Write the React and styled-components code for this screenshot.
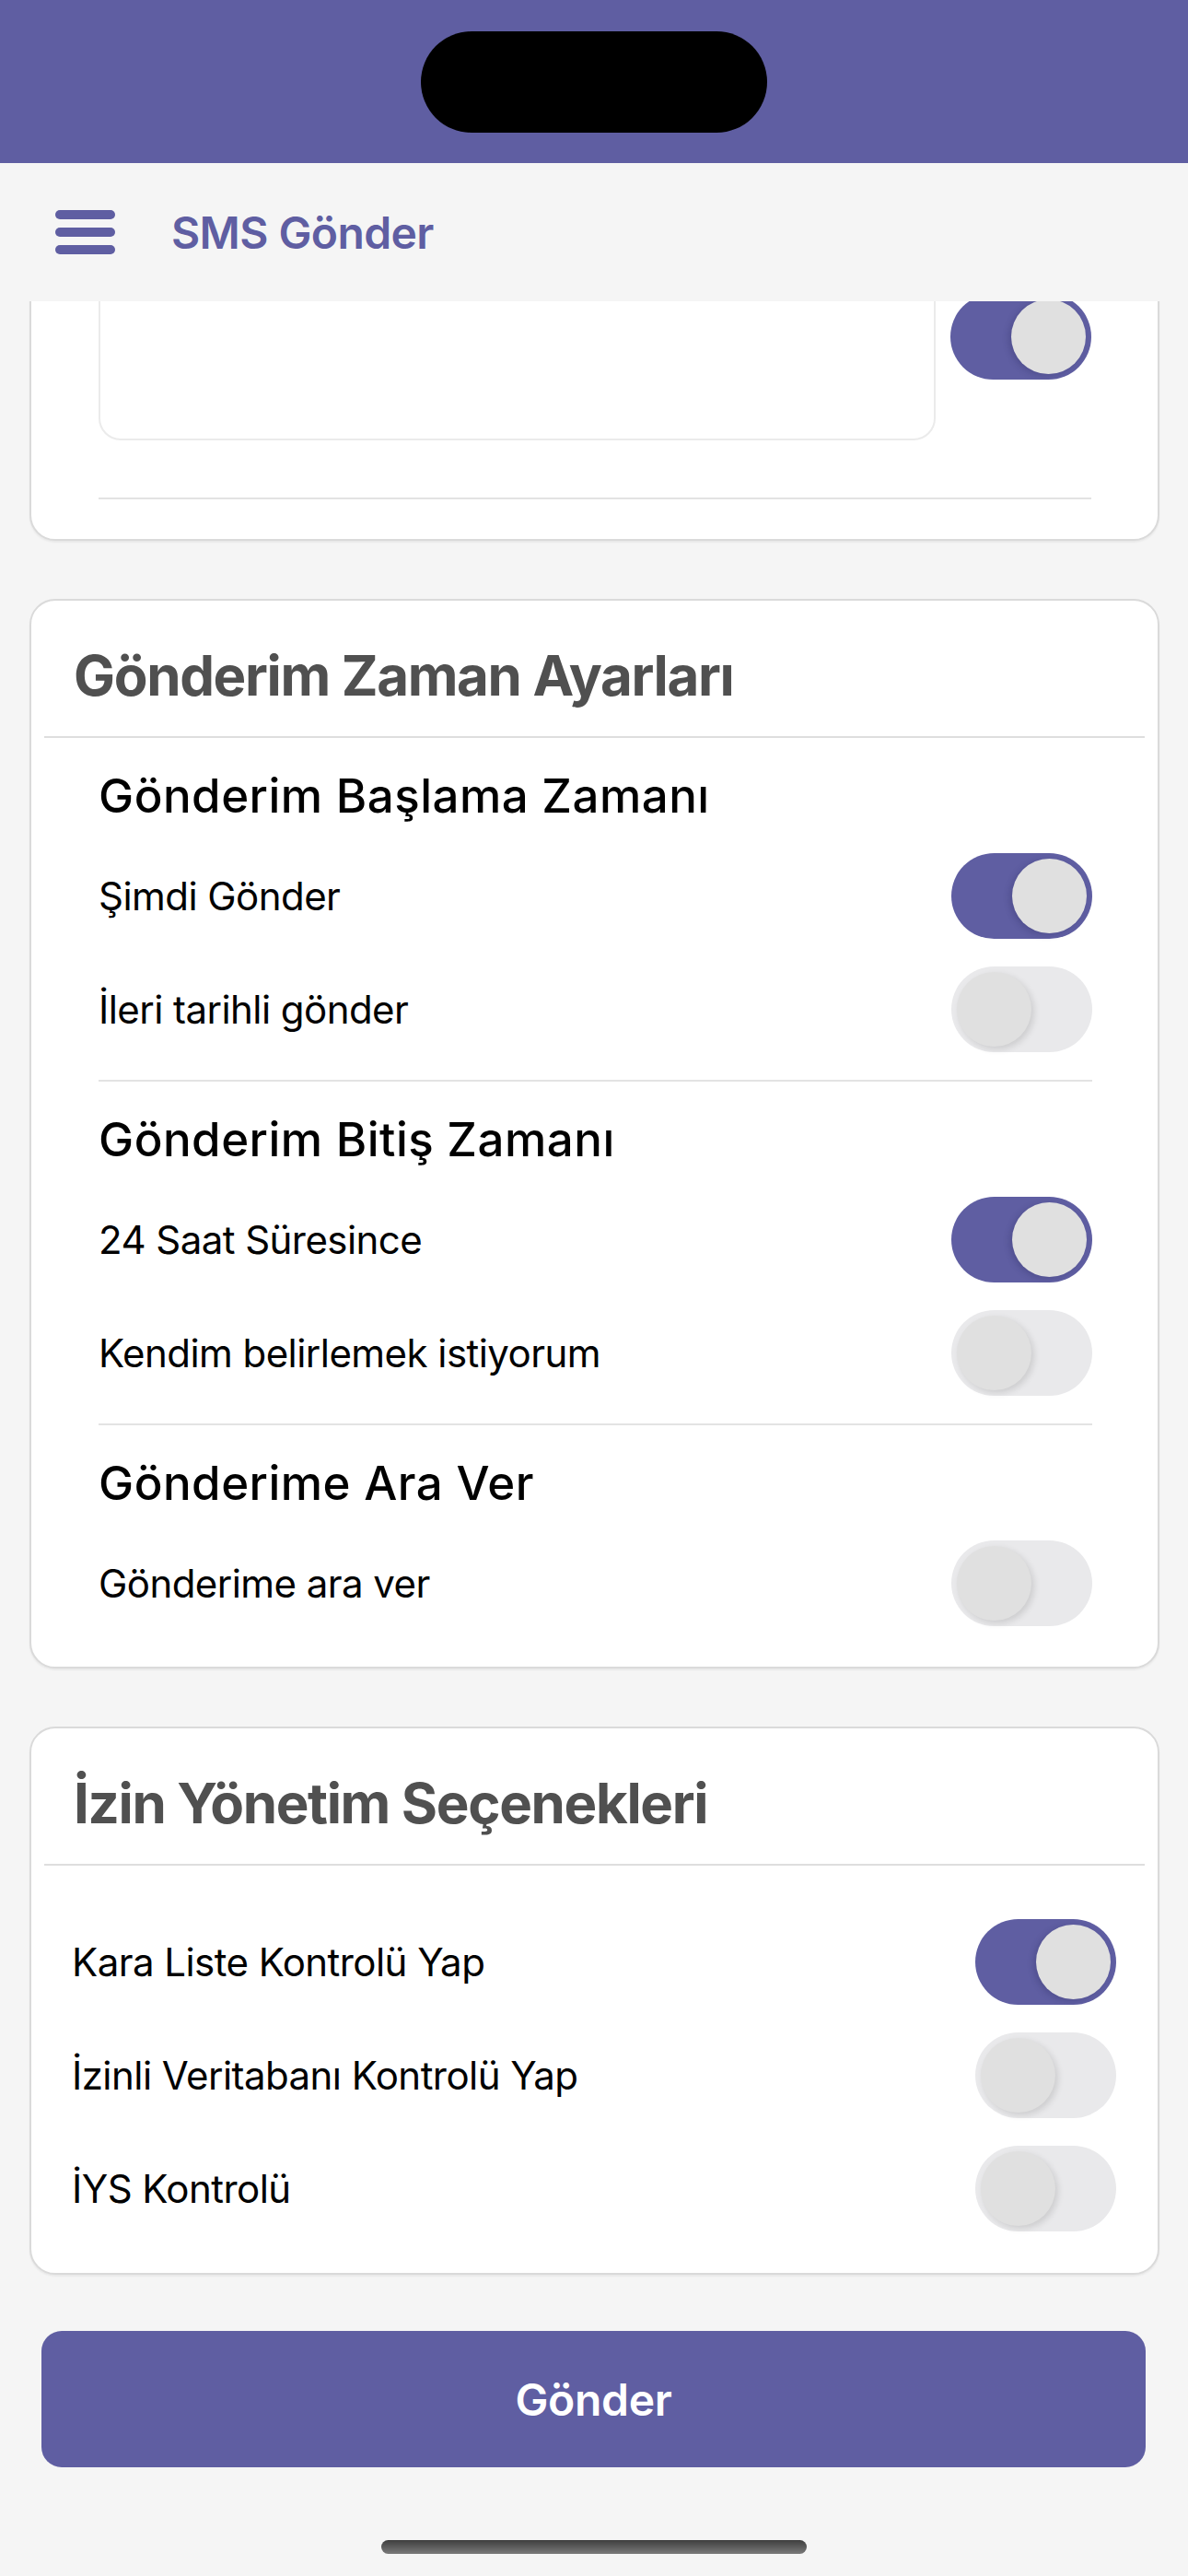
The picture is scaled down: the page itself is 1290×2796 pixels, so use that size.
import styled, { createGlobalStyle } from "styled-components";

const GlobalStyle = createGlobalStyle`
  * {
    box-sizing: border-box;
  }
  body {
    margin: 0;
    background: #f5f5f5;
    font-family: Inter, "Noto Sans", "Liberation Sans", sans-serif;
  }
`;

const PURPLE = "#5f5ea2";

const Screen = styled.div`
  width: 1290px;
  height: 2796px;
  display: flex;
  flex-direction: column;
  overflow: hidden;
  background: #f5f5f5;
`;

const StatusBar = styled.div`
  height: 177px;
  flex-shrink: 0;
  background: ${PURPLE};
  display: flex;
  justify-content: center;
  padding-top: 34px;
`;

const Island = styled.div`
  width: 376px;
  height: 110px;
  border-radius: 55px;
  background: #000;
`;

const Header = styled.div`
  height: 150px;
  flex-shrink: 0;
  display: flex;
  align-items: center;
  gap: 61px;
  padding-left: 60px;
  background: #f5f5f5;
  position: relative;
  z-index: 2;
`;

const Burger = styled.div`
  width: 65px;
  display: flex;
  flex-direction: column;
  gap: 9px;

  span {
    display: block;
    height: 10px;
    border-radius: 5px;
    background: ${PURPLE};
  }
`;

const HeaderTitle = styled.h1`
  margin: 0;
  font-size: 48px;
  font-weight: 600;
  color: ${PURPLE};
  letter-spacing: -0.6px;
`;

const Scroller = styled.div`
  flex: 1;
  overflow: hidden;
`;

/* scroll offset: first card is partly under the header */
const ScrollContent = styled.div`
  margin-top: -117px;
  padding: 0 31px 0 32px;
  display: flex;
  flex-direction: column;
  gap: 63px;
`;

const Card = styled.section`
  background: #fff;
  border: 2px solid #dadada;
  border-radius: 28px;
  box-shadow: 0 2px 2px rgba(0, 0, 0, 0.05);
  padding: ${(p) => p.$pad || "0 14px 44px"};
`;

const CardTitle = styled.h2`
  margin: 0;
  padding: 45px 0 30px 32px;
  font-size: 60px;
  line-height: 72px;
  font-weight: 700;
  color: #505050;
  letter-spacing: -1.35px;
  border-bottom: 2px solid #dedede;
`;

const Group = styled.div`
  margin: 0 57px 0 59px;
  padding: 32px 0 30px;
  border-bottom: ${(p) => (p.$last ? "none" : "2px solid #e3e3e3")};
  padding-bottom: ${(p) => (p.$last ? "0" : "30px")};
`;

const GroupTitle = styled.h3`
  margin: 0 0 32px;
  font-size: 51px;
  line-height: 61px;
  font-weight: 500;
  color: #000;
  letter-spacing: 0.5px;
`;

const Rows = styled.div`
  display: flex;
  flex-direction: column;
  gap: 30px;
  padding: ${(p) => p.$pad || "0"};
`;

const Row = styled.div`
  height: 93px;
  display: flex;
  align-items: center;
  justify-content: space-between;
`;

const Label = styled.span`
  font-size: 42px;
  color: #000;
  letter-spacing: -0.55px;
`;

const Track = styled.div`
  width: 153px;
  height: 93px;
  border-radius: 47px;
  flex-shrink: 0;
  display: flex;
  align-items: center;
  justify-content: ${(p) => (p.$on ? "flex-end" : "flex-start")};
  padding: 0 6px;
  background: ${(p) => (p.$on ? PURPLE : "#e9e9eb")};
`;

const Knob = styled.div`
  width: 81px;
  height: 81px;
  border-radius: 50%;
  background: #e0e0e0;
  box-shadow: ${(p) =>
    p.$on
      ? "-3px 2px 6px rgba(40, 40, 90, 0.25)"
      : "3px 3px 7px rgba(0, 0, 0, 0.12)"};
`;

const Toggle = ({ on }) => (
  <Track $on={on}>
    <Knob $on={on} />
  </Track>
);

const TopRow = styled.div`
  display: flex;
  align-items: center;
  gap: 16px;
  margin: 0 72px 62px 73px;
`;

const MessageBox = styled.div`
  flex: 1;
  height: 226px;
  border: 2px solid #ebebeb;
  border-radius: 24px;
  background: #fff;
`;

const Divider = styled.div`
  height: 2px;
  margin: 0 72px 0 73px;
  background: #e3e3e3;
`;

const SendButton = styled.button`
  margin: -2px 15px 0 13px;
  height: 148px;
  border: none;
  border-radius: 22px;
  background: ${PURPLE};
  color: #fff;
  font-family: inherit;
  font-size: 48px;
  font-weight: 600;
  letter-spacing: -0.3px;
`;

const HomeArea = styled.div`
  height: 60px;
  flex-shrink: 0;
  display: flex;
  justify-content: center;
  padding-top: 21px;
`;

const HomeBar = styled.div`
  width: 462px;
  height: 15px;
  border-radius: 8px;
  background: linear-gradient(180deg, #3e3e3e, #7a7a7a);
`;

const timeGroups = [
  {
    title: "Gönderim Başlama Zamanı",
    rows: [
      { label: "Şimdi Gönder", on: true },
      { label: "İleri tarihli gönder", on: false },
    ],
  },
  {
    title: "Gönderim Bitiş Zamanı",
    rows: [
      { label: "24 Saat Süresince", on: true },
      { label: "Kendim belirlemek istiyorum", on: false },
    ],
  },
  {
    title: "Gönderime Ara Ver",
    rows: [{ label: "Gönderime ara ver", on: false }],
  },
];

const permissionRows = [
  { label: "Kara Liste Kontrolü Yap", on: true },
  { label: "İzinli Veritabanı Kontrolü Yap", on: false },
  { label: "İYS Kontrolü", on: false },
];

const App = () => {
  return (
    <>
      <GlobalStyle />
      <Screen>
        <StatusBar>
          <Island />
        </StatusBar>
        <Header>
          <Burger>
            <span />
            <span />
            <span />
          </Burger>
          <HeaderTitle>SMS Gönder</HeaderTitle>
        </Header>
        <Scroller>
          <ScrollContent>
            <Card $pad="40px 0 43px">
              <TopRow>
                <MessageBox />
                <Toggle on />
              </TopRow>
              <Divider />
            </Card>

            <Card>
              <CardTitle>Gönderim Zaman Ayarları</CardTitle>
              {timeGroups.map((g, i) => (
                <Group key={g.title} $last={i === timeGroups.length - 1}>
                  <GroupTitle>{g.title}</GroupTitle>
                  <Rows>
                    {g.rows.map((r) => (
                      <Row key={r.label}>
                        <Label>{r.label}</Label>
                        <Toggle on={r.on} />
                      </Row>
                    ))}
                  </Rows>
                </Group>
              ))}
            </Card>

            <Card $pad="0 14px 45px">
              <CardTitle>İzin Yönetim Seçenekleri</CardTitle>
              <Rows $pad="58px 31px 0 30px">
                {permissionRows.map((r) => (
                  <Row key={r.label}>
                    <Label>{r.label}</Label>
                    <Toggle on={r.on} />
                  </Row>
                ))}
              </Rows>
            </Card>

            <SendButton>Gönder</SendButton>
          </ScrollContent>
        </Scroller>
        <HomeArea>
          <HomeBar />
        </HomeArea>
      </Screen>
    </>
  );
};

export default App;
